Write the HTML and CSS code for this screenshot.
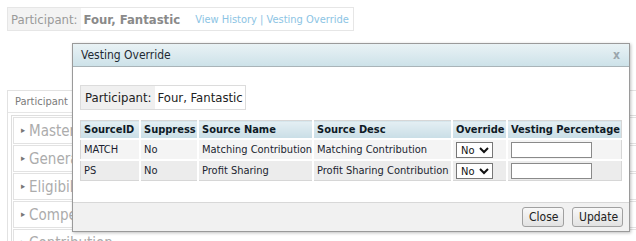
FILE: index.html
```html
<!DOCTYPE html>
<html>
<head>
  <link rel="stylesheet" href="styles.css">
</head>
<body>
  <div class="page">
    <div class="summary">
      <span class="summary-label">Participant:</span>
      <span class="summary-name">Four, Fantastic</span>
      <span class="summary-links"><a href="#">View History</a> | <a href="#">Vesting Override</a></span>
    </div>

    <div class="panel">
      <div class="panel-tab">Participant</div>
      <div class="accordion">
        <div class="acc-item"><span class="arrow">&#9656;</span>Master</div>
        <div class="acc-item"><span class="arrow">&#9656;</span>General</div>
        <div class="acc-item"><span class="arrow">&#9656;</span>Eligibility</div>
        <div class="acc-item"><span class="arrow">&#9656;</span>Compensation</div>
        <div class="acc-item"><span class="arrow">&#9656;</span>Contribution</div>
      </div>
    </div>
  </div>

  <div class="dialog">
    <div class="dialog-title">
      <span>Vesting Override</span>
      <span class="dialog-close">x</span>
    </div>
    <div class="dialog-body">
      <div class="part-box">
        <span class="part-label">Participant:</span>
        <span class="part-name">Four, Fantastic</span>
      </div>
      <table class="sources">
        <tr>
          <th class="c-id">SourceID</th>
          <th class="c-sup">Suppress</th>
          <th class="c-name">Source Name</th>
          <th class="c-desc">Source Desc</th>
          <th class="c-ovr">Override</th>
          <th class="c-pct">Vesting Percentage</th>
        </tr>
        <tr class="odd">
          <td>MATCH</td>
          <td>No</td>
          <td>Matching Contribution</td>
          <td>Matching Contribution</td>
          <td><select><option>No</option><option>Yes</option></select></td>
          <td><input type="text"></td>
        </tr>
        <tr class="even">
          <td>PS</td>
          <td>No</td>
          <td>Profit Sharing</td>
          <td>Profit Sharing Contribution</td>
          <td><select><option>No</option><option>Yes</option></select></td>
          <td><input type="text"></td>
        </tr>
      </table>
    </div>
    <div class="dialog-footer">
      <button class="btn btn-close">Close</button>
      <button class="btn btn-update">Update</button>
    </div>
  </div>
</body>
</html>
```

FILE: styles.css
```css
body {
  margin: 0;
  font-family: "DejaVu Sans Condensed", "DejaVu Sans", sans-serif;
  overflow: hidden;
  background: #fff;
}
.page {
  padding: 7px 0 0 7px;
  height: 234px;
  overflow: hidden;
}

.summary {
  display: inline-flex;
  align-items: stretch;
  height: 22px;
  border: 1px solid #e6e6e6;
  padding-right: 4px;
}
.summary-label {
  display: flex;
  align-items: center;
  background: #f3f3f3;
  color: #9a9a9a;
  font-size: 13px;
  padding: 0 3px 0 3px;
}
.summary-name {
  display: flex;
  align-items: center;
  color: #8a8a8a;
  font-size: 13px;
  font-weight: bold;
  margin-left: 3px;
}
.summary-links {
  display: flex;
  align-items: center;
  margin-left: 15px;
  font-size: 11px;
  color: #8cc4e4;
  white-space: pre;
}
.summary-links a { color: #8cc4e4; text-decoration: none; }

.panel {
  margin-top: 59px;
  border: 1px solid #e2e2e2;
  border-right: 0;
  padding: 0 0 0 3px;
}
.panel-tab {
  height: 21px;
  line-height: 21px;
  padding-left: 7px;
  font-size: 11px;
  color: #7a7a7a;
  border-bottom: 1px solid #e6e6e6;
  margin-left: -3px;
  width: 62px;
}
.accordion {
  border: 1px solid #dedede;
  border-right: 0;
  margin-top: 2px;
  padding: 1px 0 1px 1px;
}
.acc-item {
  height: 25px;
  line-height: 25px;
  border: 1px solid #e2e2e2;
  border-right: 0;
  margin-bottom: 1px;
  font-size: 15px;
  color: #acacac;
  padding-left: 7px;
}
.arrow {
  font-size: 9px;
  color: #777;
  vertical-align: 3px;
  margin-right: 4px;
}

.dialog {
  position: absolute;
  left: 72px;
  top: 43px;
  width: 556px;
  height: 187px;
  border: 1px solid #9a9a9a;
  background: #fff;
  box-shadow: 1px 1px 3px rgba(0, 0, 0, 0.25);
  display: flex;
  flex-direction: column;
}
.dialog-title {
  height: 22px;
  display: flex;
  align-items: center;
  justify-content: space-between;
  padding: 0 9px 0 8px;
  font-size: 12px;
  color: #1e2a33;
  background: linear-gradient(#e9f2f5, #cde2e9);
  border-bottom: 1px solid #a9b4b8;
}
.dialog-close {
  color: #9aa6ac;
  font-weight: bold;
  font-size: 12px;
}
.dialog-body {
  flex: 1;
  padding: 18px 7px 0 7px;
}
.part-box {
  display: inline-flex;
  height: 23px;
  border: 1px solid #dcdcdc;
  font-size: 13px;
  color: #222;
}
.part-label {
  display: flex;
  align-items: center;
  background: #f0f0f0;
  padding: 0 3px 0 4px;
}
.part-name {
  display: flex;
  align-items: center;
  padding: 0 2px 0 3px;
}

.sources {
  margin-top: 10px;
  width: 542px;
  table-layout: fixed;
  border-collapse: collapse;
  border: 1px solid #d6d6d6;
  font-size: 11px;
  color: #1b1f30;
}
.sources th, .sources td {
  border: 2px solid #fff;
  padding: 0 2px 0 3px;
  text-align: left;
  white-space: nowrap;
  overflow: hidden;
}
.sources tr:first-child th { border-top: 0; }
.sources tr th:first-child, .sources tr td:first-child { border-left: 0; }
.sources tr th:last-child, .sources tr td:last-child { border-right: 0; }
.sources tr:last-child td { border-bottom: 0; }
.sources th {
  height: 17px;
  font-weight: bold;
  background: linear-gradient(#e4eff3, #c9dee6);
  color: #0e1a26;
}
.sources td { height: 19px; }
.odd td { background: #f4f4f4; }
.even td { background: #ececec; }
.c-id { width: 53px; }
.c-sup { width: 51px; }
.c-name { width: 108px; }
.c-desc { width: 132px; }
.c-ovr { width: 48px; }
.c-pct { width: 108px; }

.sources select {
  width: 37px;
  height: 16px;
  font-family: inherit;
  font-size: 11px;
  color: #111;
  border: 1px solid #777;
  padding: 0;
  margin: 0;
  background: #fff;
}
.sources input {
  width: 77px;
  height: 12px;
  border: 1px solid #8a8a8a;
  padding: 1px;
  margin: 0;
}

.dialog-footer {
  height: 28px;
  border-top: 1px solid #d8d8d8;
  background: #f1f1f1;
  display: flex;
  justify-content: flex-end;
  align-items: center;
  gap: 8px;
  padding-right: 6px;
}
.btn {
  height: 20px;
  padding: 0 6px;
  font-family: inherit;
  font-size: 12px;
  color: #222;
  border: 1px solid #a0a0a0;
  border-radius: 3px;
  background: linear-gradient(#f8f8f8, #e2e2e2);
}
.btn-close { width: 42px; }
.btn-update { width: 51px; }
```
